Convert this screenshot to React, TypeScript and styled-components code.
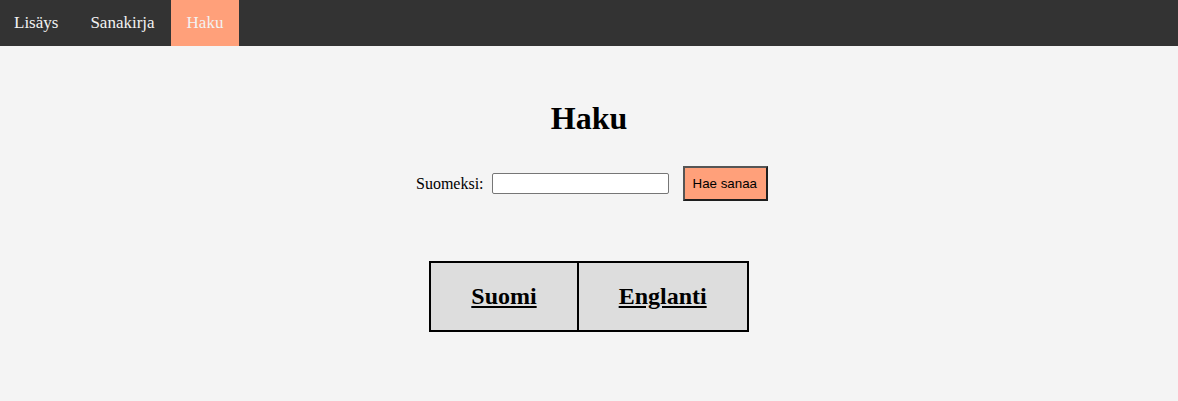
import React from "react";
import styled, { createGlobalStyle } from "styled-components";

const Global = createGlobalStyle`
  html, body { margin: 0; padding: 0; background: #f4f4f4; }
  body { font-family: "Liberation Serif", "Times New Roman", serif; color: #000; }
`;

const Nav = styled.nav`
  display: flex;
  background: #333;
  height: 46px;
`;

const NavItem = styled.a<{ $active?: boolean }>`
  display: flex;
  align-items: center;
  padding: 0 16px;
  font-size: 17px;
  color: #f2f2f2;
  text-decoration: none;
  background: ${(p) => (p.$active ? "#ffa07a" : "transparent")};
  &:first-child {
    padding-left: 14px;
  }
`;

const Main = styled.main`
  display: flex;
  flex-direction: column;
  align-items: center;
  padding-top: 54px;
`;

const Title = styled.h1`
  font-size: 32px;
  font-weight: bold;
  margin: 0;
  line-height: 37px;
`;

const Form = styled.form`
  display: flex;
  align-items: center;
  margin-top: 29px;
  padding-left: 6px;
  font-size: 16px;
`;

const Label = styled.label`
  margin-right: 8px;
`;

const Input = styled.input`
  box-sizing: border-box;
  width: 177px;
  height: 21px;
  padding: 1px 2px;
  border: 1px solid #767676;
  border-radius: 2px;
  background: #fff;
  font-size: 13px;
`;

const Button = styled.button`
  margin-left: 14px;
  padding: 8px 9px 8px 8px;
  background: #ffa07a;
  border: 2px solid #555;
  border-right-color: #1e1e1e;
  border-bottom-color: #1e1e1e;
  font-family: "Liberation Sans", Arial, sans-serif;
  font-size: 13.33px;
  line-height: 15px;
  color: #000;
`;

const Table = styled.table`
  margin-top: 60px;
  border-collapse: collapse;
`;

const Th = styled.th`
  background: #ddd;
  border: 2px solid #000;
  padding: 20px 40px;
  font-size: 24px;
  line-height: 27px;
  font-weight: bold;
`;

const HeadLink = styled.a`
  color: #000;
  text-decoration: underline;
`;

export default function App() {
  return (
    <>
      <Global />
      <Nav>
        <NavItem href="#">Lisäys</NavItem>
        <NavItem href="#">Sanakirja</NavItem>
        <NavItem href="#" $active>Haku</NavItem>
      </Nav>
      <Main>
        <Title>Haku</Title>
        <Form onSubmit={(e) => e.preventDefault()}>
          <Label>Suomeksi:</Label>
          <Input type="text" />
          <Button type="submit">Hae sanaa</Button>
        </Form>
        <Table>
          <thead>
            <tr>
              <Th><HeadLink href="#">Suomi</HeadLink></Th>
              <Th><HeadLink href="#">Englanti</HeadLink></Th>
            </tr>
          </thead>
        </Table>
      </Main>
    </>
  );
}
